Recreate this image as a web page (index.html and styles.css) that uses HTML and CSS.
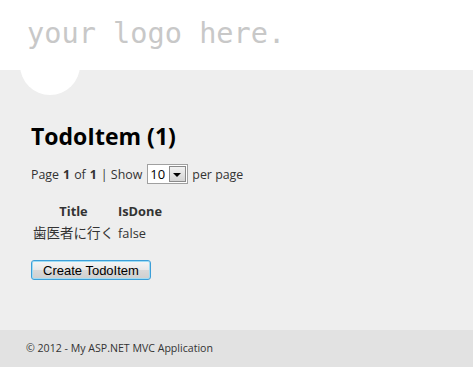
FILE: index.html
```html
<!DOCTYPE html>
<html lang="en">
<head>
    <meta charset="UTF-8">
    <title>TodoItem</title>
    <link rel="stylesheet" href="styles.css">
</head>
<body>
    <header class="header">
        <p class="site-title">your logo here.</p>
    </header>
    <div class="body-area">
        <div class="circle"></div>
        <section class="content">
            <h2>TodoItem (1)</h2>
            <div class="pager">
                Page <b>1</b> of <b>1</b> | Show
                <span class="select"><span class="select-value">10</span><span class="select-arrow"></span></span>
                per page
            </div>
            <table class="grid">
                <tr>
                    <th>Title</th>
                    <th>IsDone</th>
                </tr>
                <tr>
                    <td class="jp">歯医者に行く</td>
                    <td>false</td>
                </tr>
            </table>
            <button class="create-btn">Create TodoItem</button>
        </section>
    </div>
    <footer class="footer">
        <p>&copy; 2012 - My ASP.NET MVC Application</p>
    </footer>
</body>
</html>
```
FILE: styles.css
```css
html, body {
    margin: 0;
    padding: 0;
}
body {
    font-family: "Open Sans", "Noto Sans CJK JP", sans-serif;
    font-size: 12.4px;
    color: #333;
    background-color: #eeeeee;
    height: 367px;
    display: flex;
    flex-direction: column;
    overflow: hidden;
}
.header {
    background: #fff;
    height: 70px;
    padding-left: 27px;
    position: relative;
    z-index: 1;
}
.site-title {
    margin: 0;
    padding-top: 16px;
    font-family: "DejaVu Sans Mono", monospace;
    font-size: 28.6px;
    line-height: 34px;
    color: #c8c8c8;
}
.body-area {
    flex: 1;
    position: relative;
}
.circle {
    position: absolute;
    left: 20px;
    top: -35px;
    width: 60px;
    height: 60px;
    border-radius: 50%;
    background: #fff;
}
.content {
    padding: 51px 0 0 31px;
}
.content h2 {
    margin: 0;
    font-size: 23px;
    line-height: 30px;
    font-weight: 700;
    color: #000;
}
.pager {
    margin-top: 13px;
    display: flex;
    align-items: center;
    gap: 4px;
    height: 20px;
}
.pager b {
    color: #333;
}
.select {
    display: inline-flex;
    align-items: stretch;
    width: 39px;
    height: 18px;
    border: 1px solid #a0a0a0;
    background: #fff;
    margin: 0 0 0 1px;
}
.select-value {
    flex: 1;
    padding-left: 2px;
    font-size: 13px;
    line-height: 18px;
    color: #000;
}
.select-arrow {
    width: 15px;
    margin: 1px;
    border: 1px solid #8a8a8a;
    background: linear-gradient(#f2f2f2, #d4d4d4);
    position: relative;
}
.select-arrow::after {
    content: "";
    position: absolute;
    left: 3px;
    top: 6px;
    border-left: 4px solid transparent;
    border-right: 4px solid transparent;
    border-top: 4px solid #000;
}
.grid {
    margin-top: 16px;
    border-collapse: collapse;
}
.grid th,
.grid td {
    padding: 1px 2px;
    line-height: 20px;
    font-size: 12.8px;
}
.grid td.jp {
    font-size: 13.5px;
}
.grid th {
    font-weight: 700;
}
.create-btn {
    margin-top: 16px;
    height: 20px;
    padding: 0 11px;
    font-family: "Liberation Sans", Arial, sans-serif;
    font-size: 13px;
    color: #000;
    border: 1px solid #3c9fd8;
    border-radius: 3px;
    background: linear-gradient(#f6f6f6 0%, #e8e8e8 50%, #d9d9d9 51%, #cfcfcf 100%);
    box-shadow: inset 0 0 0 1px #9fdcf4;
}
.footer {
    height: 37px;
    background: #e2e2e2;
    padding-left: 26px;
}
.footer p {
    margin: 0;
    font-size: 10.6px;
    line-height: 37px;
    color: #333;
}
```
